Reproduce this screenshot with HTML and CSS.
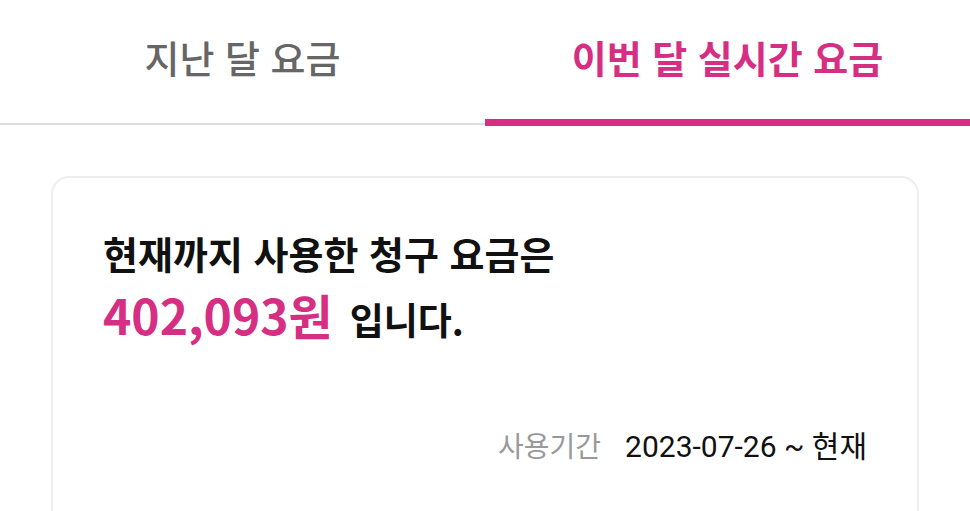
FILE: index.html
```html
<!DOCTYPE html>
<html lang="ko">
<head>
<meta charset="utf-8">
<link rel="stylesheet" href="styles.css">
</head>
<body>
<nav class="tabs">
  <div class="tab">지난 달 요금</div>
  <div class="tab active">이번 달 실시간 요금</div>
</nav>
<section class="card">
  <h1 class="title">현재까지 사용한 청구 요금은</h1>
  <p class="amount-line"><span class="amount">402,093원</span><span class="suffix">입니다.</span></p>
  <div class="period">
    <span class="period-label">사용기간</span>
    <span class="period-value">2023-07-26 ~ 현재</span>
  </div>
</section>
</body>
</html>
```

FILE: styles.css
```css
html, body {
  margin: 0;
  padding: 0;
  background: #ffffff;
}
body {
  font-family: "Noto Sans CJK KR", "Noto Sans", sans-serif;
  width: 970px;
  height: 511px;
  overflow: hidden;
}
.tabs {
  display: flex;
  height: 125px;
  box-sizing: border-box;
  border-bottom: 2px solid #dddddd;
}
.tab {
  flex: 1;
  display: flex;
  align-items: center;
  justify-content: center;
  padding-bottom: 11px;
  box-sizing: border-box;
  font-size: 38px;
  font-weight: 500;
  color: #666666;
  position: relative;
}
.tab.active {
  color: #d62e82;
  font-weight: 700;
}
.tab.active::after {
  content: "";
  position: absolute;
  left: 0;
  right: 0;
  bottom: -3px;
  height: 7px;
  background: #d62e82;
}
.card {
  margin: 51px 51px 0 51px;
  border: 2px solid #eeeeee;
  border-radius: 18px;
  padding: 46px 50px 60px 50px;
  height: 400px;
  box-sizing: border-box;
}
.title {
  margin: 0;
  font-size: 38px;
  font-weight: 700;
  line-height: 58px;
  color: #111111;
}
.amount-line {
  margin: 0;
  line-height: 64px;
  color: #111111;
}
.amount {
  font-size: 48px;
  font-weight: 700;
  color: #d62e82;
}
.suffix {
  margin-left: 17px;
  font-size: 37px;
  font-weight: 700;
}
.period {
  margin-top: 62px;
  display: flex;
  justify-content: flex-end;
  align-items: baseline;
  gap: 24px;
}
.period-label {
  font-size: 28px;
  color: #999999;
}
.period-value {
  font-size: 30px;
  color: #111111;
  font-family: Roboto, "Noto Sans CJK KR", sans-serif;
}
```
